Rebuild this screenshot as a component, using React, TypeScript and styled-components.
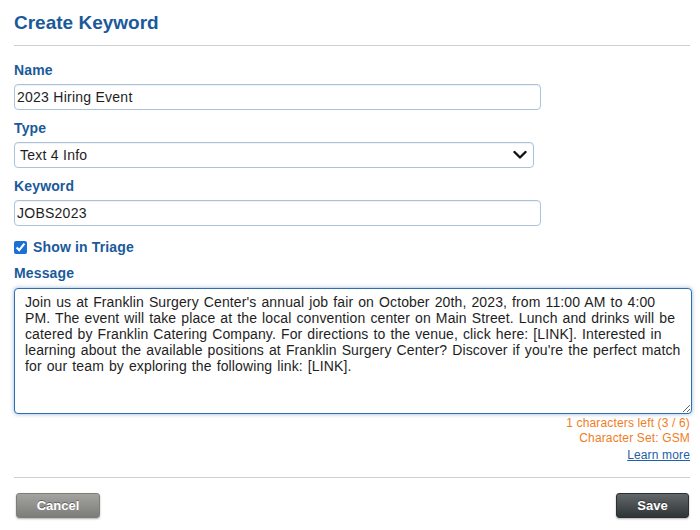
import React from "react";
import styled, { createGlobalStyle } from "styled-components";

const GlobalStyle = createGlobalStyle`
  html, body {
    margin: 0;
    padding: 0;
    background: #ffffff;
    font-family: "Liberation Sans", Arial, sans-serif;
  }
`;

const message =
  "Join us at Franklin Surgery Center's annual job fair on October 20th, 2023, from 11:00 AM to 4:00 PM. The event will take place at the local convention center on Main Street. Lunch and drinks will be catered by Franklin Catering Company. For directions to the venue, click here: [LINK]. Interested in learning about the available positions at Franklin Surgery Center? Discover if you're the perfect match for our team by exploring the following link: [LINK].";

const App = () => {
  return (
    <>
      <GlobalStyle />
      <Page>
        <Title>Create Keyword</Title>
        <Divider />
        <Form>
          <Field>
            <Label>Name</Label>
            <TextInput defaultValue="2023 Hiring Event" $width={527} />
          </Field>
          <Field>
            <Label>Type</Label>
            <SelectWrap>
              <Select defaultValue="t4i">
                <option value="t4i">Text 4 Info</option>
              </Select>
              <Chevron viewBox="0 0 14 10" aria-hidden="true">
                <path d="M1.5 2 L7 7.5 L12.5 2" />
              </Chevron>
            </SelectWrap>
          </Field>
          <Field>
            <Label>Keyword</Label>
            <TextInput defaultValue="JOBS2023" $width={527} />
          </Field>
          <CheckRow>
            <input type="checkbox" defaultChecked />
            <span>Show in Triage</span>
          </CheckRow>
          <Field $gap={7}>
            <Label>Message</Label>
            <MessageBox defaultValue={message} spellCheck={false} />
          </Field>
          <Counter>
            <span>1 characters left (3 / 6)</span>
            <span>Character Set: GSM</span>
            <LearnMore href="#">Learn more</LearnMore>
          </Counter>
        </Form>
        <Divider />
        <Footer>
          <Button $variant="cancel">Cancel</Button>
          <Button $variant="save">Save</Button>
        </Footer>
      </Page>
    </>
  );
};

const Page = styled.div`
  width: 676px;
  padding: 12px 10px 12px 14px;
`;

const Title = styled.h1`
  margin: 0;
  font-size: 19px;
  line-height: 22px;
  font-weight: 700;
  color: #1a5a9a;
`;

const Divider = styled.hr`
  margin: 11px 0 0;
  border: none;
  border-top: 1px solid #cfcfcf;
  height: 0;
`;

const Form = styled.div`
  display: flex;
  flex-direction: column;
  padding-top: 16px;
`;

const Field = styled.div<{ $gap?: number }>`
  display: flex;
  flex-direction: column;
  gap: ${(p) => p.$gap ?? 6}px;
  margin-bottom: 10px;
`;

const Label = styled.label`
  font-size: 14px;
  line-height: 16px;
  font-weight: 700;
  letter-spacing: 0.15px;
  color: #1a5a9a;
`;

const inputBase = `
  box-sizing: border-box;
  height: 26px;
  border: 1px solid #a9c3df;
  border-radius: 4px;
  background: #ffffff;
  box-shadow: inset 0 1px 1px rgba(0, 0, 0, 0.06);
  font-family: "Liberation Sans", Arial, sans-serif;
  font-size: 14px;
  letter-spacing: 0.25px;
  color: #1e1e1e;
  outline: none;
`;

const TextInput = styled.input<{ $width: number }>`
  ${inputBase}
  width: ${(p) => p.$width}px;
  padding: 0 2px;
`;

const SelectWrap = styled.div`
  position: relative;
  width: 520px;
`;

const Select = styled.select`
  ${inputBase}
  width: 100%;
  padding: 0 30px 0 5px;
  appearance: none;
  -webkit-appearance: none;
`;

const Chevron = styled.svg`
  position: absolute;
  right: 7px;
  top: 8px;
  width: 14px;
  height: 10px;
  fill: none;
  stroke: #111111;
  stroke-width: 2.4;
  stroke-linecap: round;
  stroke-linejoin: round;
  pointer-events: none;
`;

const CheckRow = styled.label`
  display: flex;
  align-items: center;
  gap: 6px;
  margin: 3px 0 10px;
  font-size: 14px;
  line-height: 16px;
  font-weight: 700;
  letter-spacing: 0.15px;
  color: #1a5a9a;

  input {
    margin: 0;
    width: 13px;
    height: 13px;
    accent-color: #1a6fd8;
  }
`;

const MessageBox = styled.textarea`
  box-sizing: border-box;
  width: 678px;
  height: 126px;
  padding: 5px 10px;
  border: 1px solid #2f6fae;
  border-radius: 4px;
  box-shadow: 0 0 4px rgba(47, 111, 174, 0.5);
  font-family: "Liberation Sans", Arial, sans-serif;
  font-size: 14px;
  line-height: 16px;
  letter-spacing: 0.12px;
  word-spacing: 1px;
  color: #1e1e1e;
  outline: none;
  resize: both;
`;

const Counter = styled.div`
  display: flex;
  flex-direction: column;
  align-items: flex-end;
  margin: -8px 0 3px;
  font-size: 12px;
  line-height: 15px;
  letter-spacing: 0.15px;
  color: #f07d1f;
`;

const LearnMore = styled.a`
  margin-top: 2px;
  color: #2161a3;
  text-decoration: underline;
`;

const Footer = styled.div`
  display: flex;
  justify-content: space-between;
  padding: 15px 1px 0 2px;
`;

const Button = styled.button<{ $variant: "cancel" | "save" }>`
  height: 25px;
  width: ${(p) => (p.$variant === "cancel" ? 84 : 73)}px;
  border: 1px solid ${(p) => (p.$variant === "cancel" ? "#7d7d79" : "#2c3032")};
  border-radius: 3px;
  background: ${(p) =>
    p.$variant === "cancel"
      ? "linear-gradient(#a3a39f, #7c7c78)"
      : "linear-gradient(#62676a, #2f3436)"};
  box-shadow: 0 1px 2px rgba(0, 0, 0, 0.3);
  color: #ffffff;
  font-family: "Liberation Sans", Arial, sans-serif;
  font-size: 13px;
  font-weight: 700;
  text-shadow: 0 -1px 0 rgba(0, 0, 0, 0.35);
  cursor: pointer;
`;

export default App;
